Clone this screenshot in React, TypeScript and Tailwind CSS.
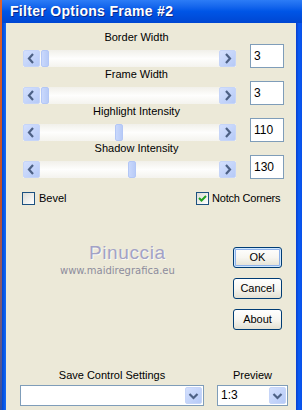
import React from 'react';

const ui = "font-['Liberation_Sans',Arial,sans-serif]";

function Arrow({ dir }: { dir: 'left' | 'right' | 'down' }) {
  const d = dir === 'left' ? 'M10 4 L6 8.5 L10 13' : dir === 'right' ? 'M7 4 L11 8.5 L7 13' : 'M4.5 7 L8.5 11 L12.5 7';
  return (
    <div className="flex h-[17px] w-[17px] shrink-0 items-center justify-center rounded-[2px] border border-[#c6d5f8] bg-gradient-to-br from-[#d4e0fd] to-[#b6caf7]">
      <svg width="17" height="17" viewBox="0 0 17 17" className="-m-px">
        <path d={d} fill="none" stroke="#4d6185" strokeWidth="2.2" />
      </svg>
    </div>
  );
}

function Slider({ label, value, thumb }: { label: string; value: string; thumb: string }) {
  return (
    <div className="flex flex-col">
      <div className="h-[13px] w-[227px] text-center text-[11px] leading-[13px] text-black">{label}</div>
      <div className="flex items-end">
        <div className="mb-px flex h-[17px] w-[213px] bg-gradient-to-b from-[#f1f0ea] via-[#fefefd] to-[#f4f3ee]">
          <Arrow dir="left" />
          <div className="flex flex-1 items-stretch">
            <div className={`h-[17px] w-[8px] rounded-[2px] border border-[#b3c7f6] bg-gradient-to-r from-[#c9d8fc] to-[#b8cbf7] ${thumb}`} />
          </div>
          <Arrow dir="right" />
        </div>
        <div className="ml-[14px] h-[24px] w-[34px] border border-[#7f9db9] bg-white pl-[3px] text-[12px] leading-[22px] text-black">
          {value}
        </div>
      </div>
    </div>
  );
}

function Btn({ label, def }: { label: string; def?: boolean }) {
  return (
    <div
      className={`flex h-[21px] w-[49px] items-center justify-center rounded-[3px] border border-[#003c74] bg-gradient-to-b from-white via-[#f7f6f1] to-[#e3e0d2] text-[11px] text-black ${
        def ? 'shadow-[inset_0_0_0_1px_#cee7ff,inset_0_0_0_2px_#8fb2ea]' : ''
      }`}
    >
      {label}
    </div>
  );
}

function Combo({ w, value }: { w: string; value?: string }) {
  return (
    <div className={`flex h-[21px] items-center border border-[#7f9db9] bg-white p-px ${w}`}>
      <div className="flex-1 pl-[2px] text-[12px] leading-[17px] text-black">{value}</div>
      <Arrow dir="down" />
    </div>
  );
}

function Check({ on }: { on?: boolean }) {
  return (
    <div className="flex h-[13px] w-[13px] shrink-0 items-center justify-center border border-[#1c5180] bg-gradient-to-br from-[#dcdcd6] to-white">
      {on && (
        <svg width="11" height="11" viewBox="0 0 11 11">
          <path d="M2 5 L4.5 7.5 L9 3" fill="none" stroke="#21a121" strokeWidth="2" />
        </svg>
      )}
    </div>
  );
}

export default function App() {
  return (
    <div className={`flex h-[410px] w-[302px] overflow-hidden bg-[#3a6ea5] ${ui}`}>
      <div className="w-[2px] bg-gradient-to-b from-[#e0622a] via-[#c0502a] to-[#2b4fa8]" />
      <div className="flex flex-1 flex-col">
        <div className="flex h-[23px] items-center bg-gradient-to-b from-[#2c7cf6] via-[#0055e6] to-[#0046d2] pl-[8px] text-[14px] font-bold tracking-[0.3px] text-white [text-shadow:1px_1px_#0c2a8a]">
          Filter Options Frame #2
        </div>
        <div className="flex flex-1">
          <div className="w-[4px] bg-gradient-to-r from-[#0046d6] to-[#166af5]" />
          <div className="flex flex-1 flex-col bg-[#ece9d8]">
            <div className="flex flex-col pl-[17px] pt-[8px]">
              <Slider label="Border Width" value="3" thumb="ml-px" />
              <Slider label="Frame Width" value="3" thumb="ml-px" />
              <Slider label="Highlight Intensity" value="110" thumb="ml-[75px]" />
              <Slider label="Shadow Intensity" value="130" thumb="ml-[88px]" />
            </div>

            <div className="mt-[13px] flex h-[13px] items-center whitespace-nowrap pl-[16px] text-[11px] text-black">
              <div className="flex w-[174px] items-center gap-[4px]">
                <Check />
                <span>Bevel</span>
              </div>
              <div className="flex items-center gap-[3px]">
                <Check on />
                <span className="tracking-[-0.2px]">Notch Corners</span>
              </div>
            </div>

            <div className="mt-[36px] flex">
              <div className="flex w-[227px] flex-col">
                <div className="h-[23px] pl-[83px] text-[19px] leading-[23px] tracking-[0.6px] text-[#a2a2c6] [text-shadow:1px_1px_#fbfaf5]">
                  Pinuccia
                </div>
                <div className="h-[14px] pl-[54px] font-['DejaVu_Sans',sans-serif] text-[10px] leading-[14px] text-[#8c8c9c]">
                  www.maidiregrafica.eu
                </div>
              </div>
              <div className="mt-[6px] flex flex-col gap-[10px]">
                <Btn label="OK" def />
                <Btn label="Cancel" />
                <Btn label="About" />
              </div>
            </div>

            <div className="mt-[39px] flex text-[11px] leading-[13px] text-black">
              <div className="ml-[14px] flex w-[184px] flex-col gap-[3px]">
                <div className="text-center">Save Control Settings</div>
                <Combo w="w-[184px]" />
              </div>
              <div className="ml-[13px] flex w-[71px] flex-col gap-[3px]">
                <div className="text-center">Preview</div>
                <Combo w="w-[71px]" value="1:3" />
              </div>
            </div>
          </div>
          <div className="w-[6px] bg-gradient-to-r from-[#0a3fcf] via-[#0a5cf5] to-[#0850e8]" />
        </div>
      </div>
    </div>
  );
}
